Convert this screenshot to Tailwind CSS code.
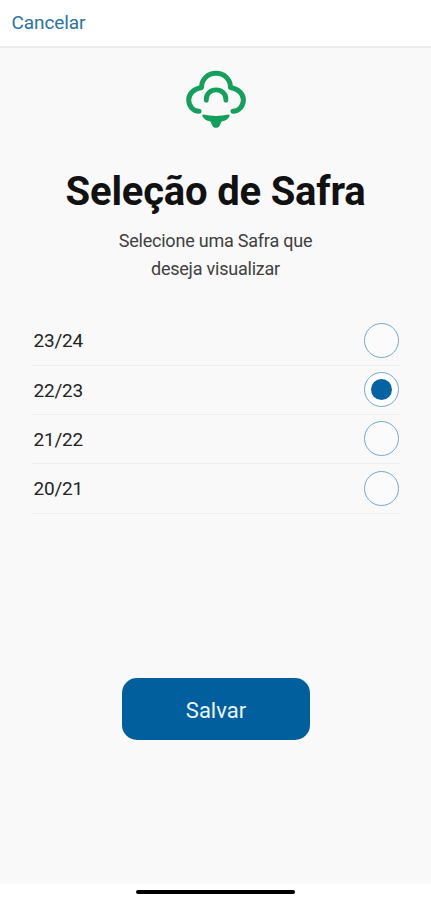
<!DOCTYPE html>
<html lang="pt-BR">
<head>
<meta charset="utf-8">
<meta name="viewport" content="width=device-width, initial-scale=1">
<title>Seleção de Safra</title>
<script src="https://cdn.jsdelivr.net/npm/@tailwindcss/browser@4"></script>
</head>
<body class="flex h-[900px] w-[431px] flex-col overflow-hidden bg-white font-[Roboto,sans-serif] text-[#242424]">
<header class="flex h-[48px] shrink-0 items-center border-b-2 border-[#ececec] pl-[11.5px]">
  <button class="text-[19px] leading-6 tracking-[-0.1px] text-[#2a73a2]">Cancelar</button>
</header>
<main class="flex h-[836px] shrink-0 flex-col items-center bg-[#f9f9f9] pt-[21px]">
  <svg class="h-[62px] w-[64px]" viewBox="184 69 64 62" fill="none" aria-hidden="true">
    <path d="M199 111.200C193 111.200 188.700 106 188.700 99.800C188.700 93.500 194.500 88.500 201.500 87.500C201.500 79 208 73.300 216 73.300C224 73.300 230.500 79 230.500 87.500C237.500 88.500 243.400 93.500 243.400 99.800C243.400 106 239 111.200 233 111.200" stroke="#12a05c" stroke-width="5" stroke-linecap="round" stroke-linejoin="round"/>
    <path d="M206.300 100.300V99.300C206.300 93.600 210.600 89.900 216.100 89.900S225.900 93.600 225.900 99.300V100.300" stroke="#12a05c" stroke-width="4.900" stroke-linecap="round"/>
    <path d="M203.200 114.600Q216 117.400 228.800 114.600C230 114.500 229.700 116.300 229 117.300C227.500 119.700 225 120.800 222.500 121.200C220.700 121.600 220.700 123.700 220 125C218.500 128.800 213.500 128.800 212 125C211.300 123.700 211.300 121.600 209.500 121.200C207 120.800 204.500 119.700 203 117.300C202.300 116.300 202 114.500 203.200 114.600Z" fill="#12a05c"/>
  </svg>
  <h1 class="mt-[37px] text-[40px] leading-[48px] font-bold tracking-[-0.2px] whitespace-nowrap text-[#111]">Seleção de Safra</h1>
  <p class="mt-[11px] text-center text-[18px] leading-7 tracking-[-0.22px] text-[#404040]">Selecione uma Safra que<br>deseja visualizar</p>
  <ul class="mt-[33px] w-[370px] text-[19px] tracking-[-0.2px]">
    <li class="flex h-[50px] items-center justify-between border-b border-[#eeeeee] pr-[2px] pl-[3px]"><span class="pt-[2px]">23/24</span><span class="size-[35px] rounded-full border border-[#75a9d2] bg-[#fbfbfb]"></span></li>
    <li class="flex h-[49px] items-center justify-between border-b border-[#eeeeee] pr-[2px] pl-[3px]"><span class="pt-[2px]">22/23</span><span class="mb-[2px] flex size-[35px] items-center justify-center rounded-full border border-[#75a9d2] bg-white"><span class="size-[21px] rounded-full bg-[#0563a4]"></span></span></li>
    <li class="flex h-[49px] items-center justify-between border-b border-[#eeeeee] pr-[2px] pl-[3px]"><span class="pt-[2px]">21/22</span><span class="mb-[2px] size-[35px] rounded-full border border-[#75a9d2] bg-[#fbfbfb]"></span></li>
    <li class="flex h-[50px] items-center justify-between border-b border-[#eeeeee] pr-[2px] pl-[3px]"><span class="pt-[2px]">20/21</span><span class="mb-px size-[35px] rounded-full border border-[#75a9d2] bg-[#fbfbfb]"></span></li>
  </ul>
  <button class="mt-[164px] ml-px h-[62px] w-[188px] rounded-[15px] bg-[#025f9e] pt-[2px] text-[22px] text-[#eaf6ff]">Salvar</button>
</main>
<footer class="flex flex-1 justify-center pt-[6px]"><div class="h-[4px] w-[159px] shrink-0 rounded-full bg-black"></div></footer>
</body>
</html>
